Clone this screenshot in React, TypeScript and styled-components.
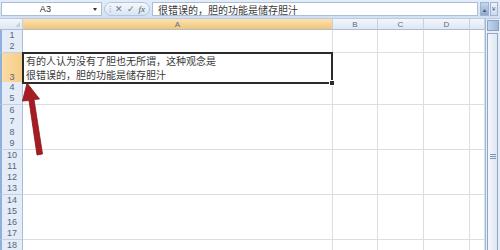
import { createGlobalStyle } from 'styled-components'
import styled from 'styled-components'

const GlobalStyle = createGlobalStyle`
  html, body {
    margin: 0;
    padding: 0;
    background: #ffffff;
    overflow: hidden;
  }
  body {
    font-family: "Liberation Sans", "Noto Sans CJK SC", sans-serif;
  }
`

const COLS = '23px 310px 45px 46px 46px 15px'

const Page = styled.div`
  position: relative;
  width: 500px;
  height: 250px;
  overflow: hidden;
  background: #fff;
`

// Formula bar
const FormulaBar = styled.div`
  height: 19px;
  display: flex;
  align-items: center;
  gap: 2px;
  padding: 0 2px 0 1px;
  box-sizing: border-box;
  background: linear-gradient(#e3ecf8, #d3e0f1);
  border-bottom: 1px solid #b8cbe3;
`

const NameBox = styled.div`
  width: 101px;
  height: 14px;
  box-sizing: border-box;
  background: #fff;
  border: 1px solid #a9bfd6;
  display: flex;
  align-items: center;
  font-size: 9px;
  color: #2a2a2a;
`

const NameText = styled.span`
  flex: 1;
  text-align: center;
  padding-right: 4px;
  letter-spacing: 0.3px;
`

const DropArrow = styled.span`
  width: 0;
  height: 0;
  margin-right: 4px;
  border-left: 2.5px solid transparent;
  border-right: 2.5px solid transparent;
  border-top: 3px solid #333;
`

const ButtonPill = styled.div`
  width: 46px;
  height: 14px;
  box-sizing: border-box;
  border-radius: 7px;
  border: 1px solid #b3c6df;
  background: linear-gradient(#f4f8fd, #d9e5f3);
  display: flex;
  align-items: center;
  justify-content: space-around;
  padding: 0 2px;
`

const Glyph = styled.span<{ $color: string; $italic?: boolean }>`
  font-size: 9px;
  line-height: 1;
  color: ${(p) => p.$color};
  font-style: ${(p) => (p.$italic ? 'italic' : 'normal')};
  font-family: "Liberation Serif", serif;
`

const FormulaInput = styled.div`
  flex: 1;
  height: 14px;
  box-sizing: border-box;
  background: #fff;
  border: 1px solid #a9bfd6;
  display: flex;
  align-items: center;
  padding-left: 5px;
  font-size: 10px;
  color: #3a3a3a;
  font-family: "Noto Sans CJK SC", sans-serif;
`

const ExpandBtns = styled.div`
  width: 18px;
  height: 14px;
  display: flex;
  gap: 1px;
`

const ExpandBtn = styled.div<{ $dark?: boolean }>`
  flex: 1;
  background: ${(p) => (p.$dark ? 'linear-gradient(#c6d6ec, #8fa9cc)' : 'linear-gradient(#eef3fa, #cdd9ea)')};
  border: 1px solid #9fb4d2;
  box-sizing: border-box;
  font-size: 6px;
  color: #3d4f68;
  display: flex;
  align-items: center;
  justify-content: center;
`

// Sheet
const Body = styled.div`
  display: flex;
  height: 231px;
`

const Sheet = styled.div`
  width: 485px;
  display: flex;
  flex-direction: column;
`

const Row = styled.div<{ $h: number }>`
  display: grid;
  grid-template-columns: ${COLS};
  height: ${(p) => p.$h}px;
  flex-shrink: 0;
`

const HeadCell = styled.div<{ $active?: boolean }>`
  box-sizing: border-box;
  background: ${(p) =>
    p.$active ? 'linear-gradient(#fbe2b4, #f3c676)' : 'linear-gradient(#f3f6fb, #dfe7f2)'};
  border-right: 1px solid #c5d1e1;
  border-bottom: 1px solid #a9bdd5;
  font-size: 8px;
  color: #5a6b82;
  display: flex;
  align-items: center;
  justify-content: center;
`

const Corner = styled(HeadCell)`
  position: relative;
  &::after {
    content: '';
    position: absolute;
    right: 2px;
    bottom: 2px;
    border-left: 5px solid transparent;
    border-bottom: 5px solid #c3d0e2;
  }
`

const RowHead = styled.div<{ $active?: boolean }>`
  box-sizing: border-box;
  background: ${(p) => (p.$active ? 'linear-gradient(90deg, #fbdca4, #f6cd88)' : '#e4ecf7')};
  border-left: 2px solid #8fb0dc;
  border-bottom: 1px solid #c3d1e4;
  border-right: 1px solid #a9bdd5;
  font-size: 9px;
  color: #55667e;
  display: flex;
  align-items: flex-end;
  justify-content: center;
  line-height: 11px;
`

const Cell = styled.div`
  box-sizing: border-box;
  border-right: 1px solid #dcdfe2;
  border-bottom: 1px solid #dcdfe2;
  background: #fff;
`

const ActiveCell = styled.div`
  position: relative;
  box-sizing: border-box;
  border: 2px solid #2b2b2b;
  margin: -1px 0 0 -1px;
  background: #fff;
  padding: 0 0 0 2px;
  font-family: "Noto Sans CJK SC", sans-serif;
  font-size: 10px;
  line-height: 14px;
  color: #3a3a3a;
  z-index: 1;
  &::after {
    content: '';
    position: absolute;
    right: -4px;
    bottom: -4px;
    width: 4px;
    height: 4px;
    background: #2b2b2b;
    border: 1px solid #fff;
  }
`

const ScrollBar = styled.div`
  width: 15px;
  display: flex;
  flex-direction: column;
  background: #e6edf7;
  border-left: 1px solid #a3b8d6;
  box-sizing: border-box;
`

const ScrollBtn = styled.div`
  height: 11px;
  margin: 1px 1px 2px;
  background: linear-gradient(90deg, #c3d4ec, #9fb8da);
  border: 1px solid #8aa4c8;
  box-sizing: border-box;
`

const Thumb = styled.div`
  flex: 1;
  margin: 0 2px 0 1px;
  background: linear-gradient(90deg, #f4f7fb, #dde6f2);
  border: 1px solid #8ea8cc;
  border-bottom: none;
  box-sizing: border-box;
  display: flex;
  flex-direction: column;
  align-items: center;
  padding-top: 120px;
`

const Grip = styled.div`
  width: 6px;
  height: 5px;
  background: repeating-linear-gradient(#7f94b3 0 1px, transparent 1px 2px);
`

const ArrowLayer = styled.svg`
  position: absolute;
  left: 0;
  top: 0;
  pointer-events: none;
`

const rowHeights: number[] = [11.25, 11.25, 29.5]
for (let i = 4; i <= 18; i++) rowHeights.push(11.27)

export default function App() {
  return (
    <Page>
      <GlobalStyle />
      <FormulaBar>
        <NameBox>
          <NameText>A3</NameText>
          <DropArrow />
        </NameBox>
        <ButtonPill>
          <Glyph $color="#8aa0bd">⁝</Glyph>
          <Glyph $color="#6e7480">✕</Glyph>
          <Glyph $color="#6e7480">✓</Glyph>
          <Glyph $color="#555" $italic>
            fx
          </Glyph>
        </ButtonPill>
        <FormulaInput>很错误的，胆的功能是储存胆汁</FormulaInput>
        <ExpandBtns>
          <ExpandBtn $dark>▴</ExpandBtn>
          <ExpandBtn>¥</ExpandBtn>
        </ExpandBtns>
      </FormulaBar>

      <Body>
        <Sheet>
          <Row $h={11}>
            <Corner />
            <HeadCell $active>A</HeadCell>
            <HeadCell>B</HeadCell>
            <HeadCell>C</HeadCell>
            <HeadCell>D</HeadCell>
            <HeadCell />
          </Row>
          {rowHeights.map((h, i) => {
            const n = i + 1
            return (
              <Row key={n} $h={h}>
                <RowHead $active={n === 3}>{n}</RowHead>
                {n === 3 ? (
                  <ActiveCell>
                    有的人认为没有了胆也无所谓，这种观念是
                    <br />
                    很错误的，胆的功能是储存胆汁
                  </ActiveCell>
                ) : (
                  <Cell />
                )}
                <Cell />
                <Cell />
                <Cell />
                <Cell />
              </Row>
            )
          })}
        </Sheet>
        <ScrollBar>
          <ScrollBtn />
          <Thumb>
            <Grip />
          </Thumb>
        </ScrollBar>
      </Body>

      <ArrowLayer width="500" height="250" viewBox="0 0 500 250">
        <path
          d="M27 83 L39.5 99 L34 99.5 L42.5 154 L37 155 L29 100.5 L22.5 101 Z"
          fill="#a51d22"
          stroke="#8a1418"
          strokeWidth="0.8"
          strokeLinejoin="round"
        />
      </ArrowLayer>
    </Page>
  )
}
